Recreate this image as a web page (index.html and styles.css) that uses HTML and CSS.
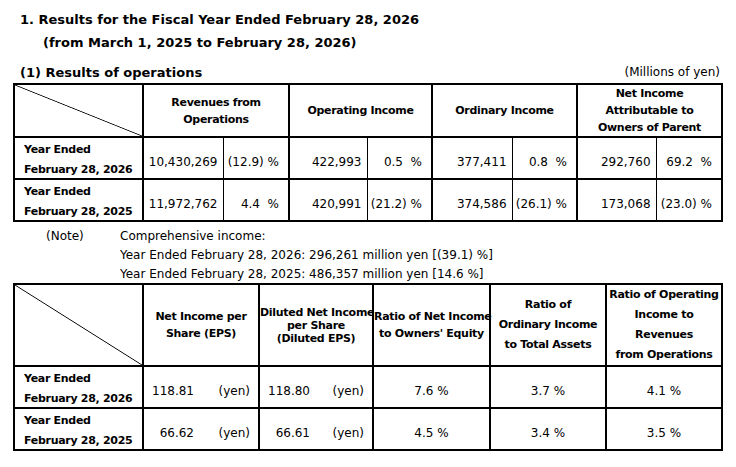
FILE: index.html
```html
<!DOCTYPE html>
<html>
<head>
<meta charset="utf-8">
<link rel="stylesheet" href="styles.css">
</head>
<body>
<div class="page">
  <h1 class="title">
    <span class="t1">1. Results for the Fiscal Year Ended February 28, 2026</span>
    <span class="t2">(from March 1, 2025 to February 28, 2026)</span>
  </h1>
  <div class="subhead">
    <h2 class="sub">(1) Results of operations</h2>
    <span class="unit">(Millions of yen)</span>
  </div>
  <table class="tbl t-ops">
    <colgroup>
      <col style="width:129px"><col style="width:80px"><col style="width:66px"><col style="width:78px"><col style="width:65px"><col style="width:80px"><col style="width:65px"><col style="width:79px"><col style="width:66px">
    </colgroup>
    <tr class="hd">
      <th class="diag"></th>
      <th colspan="2">Revenues from<br>Operations</th>
      <th colspan="2">Operating Income</th>
      <th colspan="2">Ordinary Income</th>
      <th colspan="2" class="tight">Net Income<br>Attributable to<br>Owners of Parent</th>
    </tr>
    <tr class="row">
      <th class="lbl"><div class="lbl-in">Year Ended<br>February 28, 2026</div></th>
      <td class="v">10,430,269</td><td class="p">(12.9) %</td>
      <td class="v">422,993</td><td class="p">0.5  %</td>
      <td class="v">377,411</td><td class="p">0.8  %</td>
      <td class="v">292,760</td><td class="p">69.2  %</td>
    </tr>
    <tr class="row">
      <th class="lbl"><div class="lbl-in">Year Ended<br>February 28, 2025</div></th>
      <td class="v">11,972,762</td><td class="p">4.4  %</td>
      <td class="v">420,991</td><td class="p">(21.2) %</td>
      <td class="v">374,586</td><td class="p">(26.1) %</td>
      <td class="v">173,068</td><td class="p">(23.0) %</td>
    </tr>
  </table>
  <div class="note">
    <span class="note-k">(Note)</span>
    <div class="note-v">
      <p>Comprehensive income:</p>
      <p>Year Ended February 28, 2026: 296,261 million yen [(39.1) %]</p>
      <p>Year Ended February 28, 2025: 486,357 million yen [14.6 %]</p>
    </div>
  </div>
  <table class="tbl t-ratio">
    <colgroup>
      <col style="width:129px"><col style="width:116px"><col style="width:114px"><col style="width:117px"><col style="width:116px"><col style="width:116px">
    </colgroup>
    <tr class="hd2">
      <th class="diag"></th>
      <th>Net Income per<br>Share (EPS)</th>
      <th class="dil">Diluted Net Income<br>per Share<br>(Diluted EPS)</th>
      <th>Ratio of Net Income<br>to Owners' Equity</th>
      <th class="loose">Ratio of<br>Ordinary Income<br>to Total Assets</th>
      <th class="loose">Ratio of Operating<br>Income to<br>Revenues<br>from Operations</th>
    </tr>
    <tr class="row">
      <th class="lbl"><div class="lbl-in">Year Ended<br>February 28, 2026</div></th>
      <td><div class="eps"><span class="n">118.81</span><span>(yen)</span></div></td>
      <td><div class="eps"><span class="n">118.80</span><span>(yen)</span></div></td>
      <td class="c">7.6 %</td>
      <td class="c">3.7 %</td>
      <td class="c">4.1 %</td>
    </tr>
    <tr class="row">
      <th class="lbl"><div class="lbl-in">Year Ended<br>February 28, 2025</div></th>
      <td><div class="eps"><span class="n">66.62</span><span>(yen)</span></div></td>
      <td><div class="eps"><span class="n">66.61</span><span>(yen)</span></div></td>
      <td class="c">4.5 %</td>
      <td class="c">3.4 %</td>
      <td class="c">3.5 %</td>
    </tr>
  </table>
</div>
</body>
</html>
```

FILE: styles.css
```css
html, body {
  margin: 0;
  padding: 0;
  background: #fff;
}
body {
  font-family: "DejaVu Sans", Verdana, sans-serif;
  color: #000;
  font-size: 12px;
}
.page {
  width: 708px;
  padding: 8px 0 0 13px;
}
.title {
  margin: 0;
  font-size: 13px;
  font-weight: bold;
  line-height: 23px;
}
.t1 {
  display: block;
  padding-left: 7px;
}
.t2 {
  display: block;
  padding-left: 30px;
}
.subhead {
  display: flex;
  justify-content: space-between;
  align-items: center;
  margin-top: 7px;
  height: 22px;
}
.sub {
  margin: 0;
  padding-left: 7px;
  font-size: 13px;
  font-weight: bold;
}
.unit {
  font-size: 12px;
  padding-right: 1px;
}
.tbl {
  border-collapse: collapse;
  table-layout: fixed;
  width: 708px;
  border: 2px solid #000;
}
.tbl th, .tbl td {
  border: 2px solid #000;
  padding: 0;
  font-size: 12px;
  white-space: pre;
}
.tbl th {
  font-weight: bold;
  font-size: 11px;
  text-align: center;
  line-height: 17px;
  letter-spacing: -0.3px;
}
.diag {
  background: linear-gradient(to top right, transparent calc(50% - 0.8px), #000 50%, transparent calc(50% + 0.8px));
}
.t-ops .hd th {
  height: 51px;
}
.tbl .row th, .tbl .row td {
  height: 32px;
  padding-top: 8px;
}
.tbl .row .lbl {
  text-align: left;
  padding: 0 0 0 9px;
  height: 40px;
  vertical-align: top;
}
.lbl-in {
  box-sizing: border-box;
  height: 40px;
  padding-top: 2px;
  line-height: 20px;
}
.v {
  text-align: right;
  padding-right: 5px !important;
  border-right-width: 1px !important;
}
.p {
  text-align: right;
  padding-right: 9px !important;
  border-left-width: 1px !important;
}
.note {
  display: flex;
  padding-top: 5px;
  height: 56px;
  line-height: 19px;
}
.note-k {
  width: 107px;
  padding-left: 33px;
  box-sizing: border-box;
}
.note-v p {
  margin: 0;
}
.t-ratio .hd2 th {
  height: 75px;
}
.tbl .dil {
  line-height: 13px;
  white-space: nowrap;
}
.tbl .loose {
  line-height: 20px;
}
.eps {
  display: flex;
  justify-content: space-between;
  padding: 0 8px 0 8px;
}
.eps .n {
  width: 42px;
  text-align: right;
}
.c {
  text-align: center;
}
```
